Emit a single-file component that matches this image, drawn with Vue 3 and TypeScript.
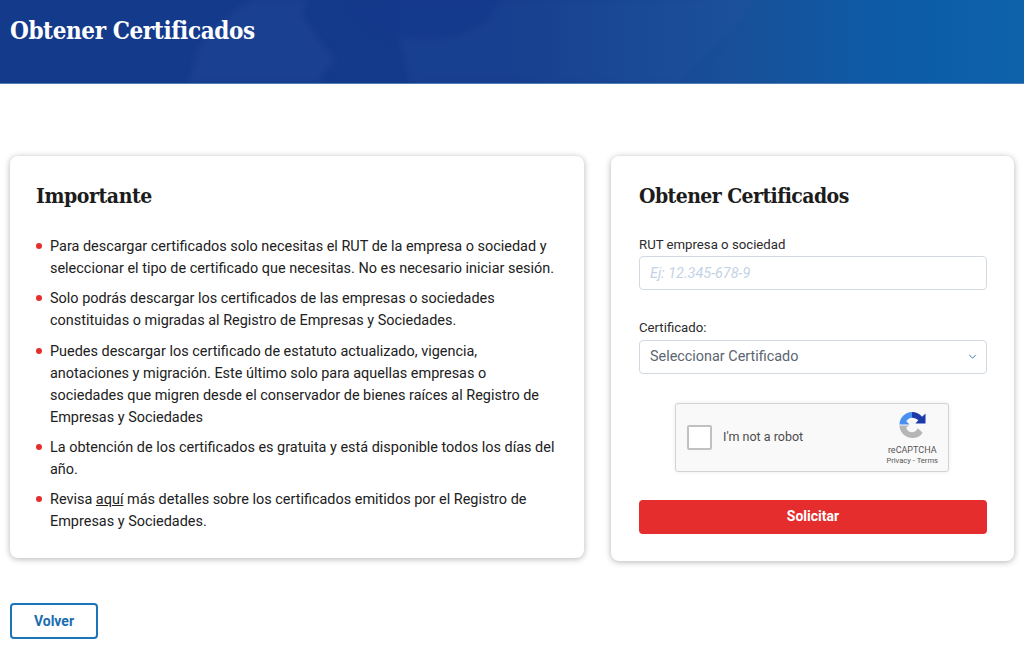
<template>
    <div class="page">
        <header class="hero">
            <svg class="hero__art" viewBox="0 0 1024 83" preserveAspectRatio="none" aria-hidden="true">
                <path d="M188 83 L200 45 L217 25 L250 0 H307 L302 15 L323 45 L335 60 L318 78 L325 83 Z" fill="#2a4f9f" opacity="0.3" />
                <path d="M410 83 L398 30 L400 0 H760 L720 40 L680 83 Z" fill="#2a569f" opacity="0.22" />
                <ellipse cx="425" cy="-5" rx="75" ry="45" fill="#143a8c" opacity="0.8" />
            </svg>
            <h1 class="hero__title">Obtener Certificados</h1>
        </header>

        <main class="content">
            <section class="card card--info">
                <h2 class="card__title">Importante</h2>
                <ul class="notes">
                    <li v-for="note in notes" :key="note">{{ note }}</li>
                    <li>Revisa <a href="#" class="notes__link">aquí</a> más detalles sobre los certificados emitidos por el Registro de Empresas y Sociedades.</li>
                </ul>
            </section>

            <section class="card card--form">
                <h2 class="card__title">Obtener Certificados</h2>
                <form @submit.prevent>
                    <label class="field__label" for="rut">RUT empresa o sociedad</label>
                    <input id="rut" v-model="rut" class="field__input" type="text" placeholder="Ej: 12.345-678-9" />

                    <label class="field__label field__label--second" for="certificado">Certificado:</label>
                    <div class="select">
                        <select id="certificado" v-model="certificado" class="field__input select__control">
                            <option value="">Seleccionar Certificado</option>
                        </select>
                        <svg class="select__chevron" viewBox="0 0 10 6" aria-hidden="true">
                            <path d="M1 1l4 4 4-4" fill="none" stroke="#3d7fb8" stroke-width="1.2" />
                        </svg>
                    </div>

                    <div class="captcha">
                        <span class="captcha__check"></span>
                        <span class="captcha__text">I'm not a robot</span>
                        <div class="captcha__brand">
                            <svg class="captcha__logo" viewBox="0 0 27 27" aria-hidden="true">
                                <path d="M0 14 C0 21 6 27 13.5 27 C18 27 22 25 24 21.5 L19 17 C18 19.5 16 21 13.5 21 C10 21 7.5 19 7 16 L10 14 Z" fill="#b5b5b5" />
                                <path d="M13 0 V6 C10.5 6 8.5 7.5 7 9.5 L10.5 13 H0 C0 6 6 0 13 0 Z" fill="#4a90f0" />
                                <path d="M13 0 C17 0 21 2 23.5 5 L27 1.5 V12 H16.5 L19.5 8.5 C18 7 15.5 6 13 6 Z" fill="#1c3aa9" />
                            </svg>
                            <span class="captcha__name">reCAPTCHA</span>
                            <span class="captcha__links">Privacy - Terms</span>
                        </div>
                    </div>

                    <button class="submit" type="submit">Solicitar</button>
                </form>
            </section>
        </main>

        <a href="#" class="back">Volver</a>
    </div>
</template>

<script setup lang="ts">
import { ref } from 'vue';

const rut = ref('');
const certificado = ref('');

const notes: string[] = [
    'Para descargar certificados solo necesitas el RUT de la empresa o sociedad y seleccionar el tipo de certificado que necesitas. No es necesario iniciar sesión.',
    'Solo podrás descargar los certificados de las empresas o sociedades constituidas o migradas al Registro de Empresas y Sociedades.',
    'Puedes descargar los certificado de estatuto actualizado, vigencia, anotaciones y migración. Este último solo para aquellas empresas o sociedades que migren desde el conservador de bienes raíces al Registro de Empresas y Sociedades',
    'La obtención de los certificados es gratuita y está disponible todos los días del año.'
];
</script>

<style>
html,
body {
    background: #fff;
    overflow: hidden;
}
</style>

<style scoped>
.page {
    height: 657px;
    font-family: Roboto, "Liberation Sans", sans-serif;
    color: #212121;
}

.hero {
    position: relative;
    height: 84px;
    padding: 15px 10px 0;
    box-sizing: border-box;
    overflow: hidden;
    border-bottom: 1px solid #4f7db5;
    background: linear-gradient(90deg, #143a8c 0%, #143a8c 50%, #185099 72%, #0c5ca8 88%, #0d62aa 100%);
}

.hero__art {
    position: absolute;
    inset: 0;
    width: 100%;
    height: 100%;
    filter: blur(3px);
}

.hero__title {
    position: relative;
    margin: 0;
    font-family: "DejaVu Serif Condensed", "DejaVu Serif", serif;
    font-size: 24px;
    letter-spacing: -0.4px;
    line-height: 32px;
    font-weight: 700;
    color: #fff;
}

.content {
    display: grid;
    grid-template-columns: 574px 403px;
    column-gap: 27px;
    align-items: start;
    padding: 72px 10px 0;
}

.card {
    box-sizing: border-box;
    background: #fff;
    border-radius: 8px;
    box-shadow: 0 1px 6px rgba(0, 0, 0, 0.3);
    padding: 26px 27px 0 26px;
}

.card--info {
    height: 402px;
}

.card--form {
    height: 405px;
    padding-left: 28px;
}

.card__title {
    margin: 0;
    font-family: "DejaVu Serif Condensed", "DejaVu Serif", serif;
    font-size: 21px;
    letter-spacing: -0.42px;
    line-height: 28px;
    font-weight: 700;
    color: #1c1c1c;
}

.card--form .card__title {
    letter-spacing: -0.57px;
}

.notes {
    margin: 26px 0 0;
    padding: 0;
    list-style: none;
    font-size: 14.45px;
    line-height: 22px;
}

.notes li {
    position: relative;
    padding-left: 14px;
    margin-bottom: 8.3px;
}

.notes li::before {
    content: "";
    position: absolute;
    left: 0;
    top: 7px;
    width: 6px;
    height: 6px;
    border-radius: 50%;
    background: #e52d2d;
}

.notes__link {
    color: inherit;
    text-decoration: underline;
}

.field__label {
    display: block;
    margin-top: 25px;
    font-size: 13.2px;
    line-height: 20px;
    color: #2b2b2b;
}

.field__label--second {
    margin-top: 28px;
}

.field__input {
    display: block;
    box-sizing: border-box;
    width: 100%;
    height: 34px;
    margin-top: 1px;
    padding: 0 10px;
    border: 1px solid #d3d9e0;
    border-radius: 4px;
    background: #fff;
    font-family: inherit;
    font-size: 14.4px;
    color: #5b6670;
}

.field__input::placeholder {
    font-style: italic;
    color: #c3d3e6;
    opacity: 1;
}

.select {
    position: relative;
    margin-top: 2px;
}

.select__control {
    appearance: none;
    margin-top: 0;
    padding-bottom: 2px;
}

.select__chevron {
    position: absolute;
    right: 10px;
    top: 14px;
    width: 9px;
    height: 5px;
}

.captcha {
    display: flex;
    align-items: center;
    box-sizing: border-box;
    width: 274px;
    height: 69px;
    margin: 29px 0 0 36px;
    padding: 0 10px 0 11px;
    border: 1px solid #d3d3d3;
    border-radius: 3px;
    background: #f9f9f9;
    box-shadow: 0 0 4px rgba(0, 0, 0, 0.08);
    font-size: 12.5px;
    color: #4c4c4c;
}

.captcha__check {
    flex: none;
    box-sizing: border-box;
    width: 25px;
    height: 25px;
    margin-bottom: 1px;
    border: 2px solid #c1c1c1;
    border-radius: 2px;
    background: #fff;
}

.captcha__text {
    margin-left: 11px;
    padding-bottom: 2px;
}

.captcha__brand {
    display: flex;
    flex-direction: column;
    align-items: center;
    margin-left: auto;
    padding-top: 1px;
    color: #555;
}

.captcha__logo {
    width: 27px;
    height: 26px;
    margin-bottom: 6px;
}

.captcha__name {
    font-size: 9px;
    line-height: 12px;
}

.captcha__links {
    font-size: 7.6px;
    line-height: 9px;
}

.submit {
    display: block;
    width: 100%;
    height: 34px;
    margin-top: 28px;
    padding-bottom: 3px;
    border: 0;
    border-radius: 4px;
    background: #e52d2d;
    font-family: inherit;
    font-size: 14px;
    font-weight: 700;
    color: #fff;
}

.back {
    display: block;
    box-sizing: border-box;
    width: 88px;
    height: 36px;
    margin: 42px 0 0 10px;
    border: 2px solid #1a75bb;
    border-radius: 4px;
    font-size: 14px;
    font-weight: 700;
    line-height: 32px;
    text-align: center;
    text-decoration: none;
    color: #1a6cb0;
}
</style>
